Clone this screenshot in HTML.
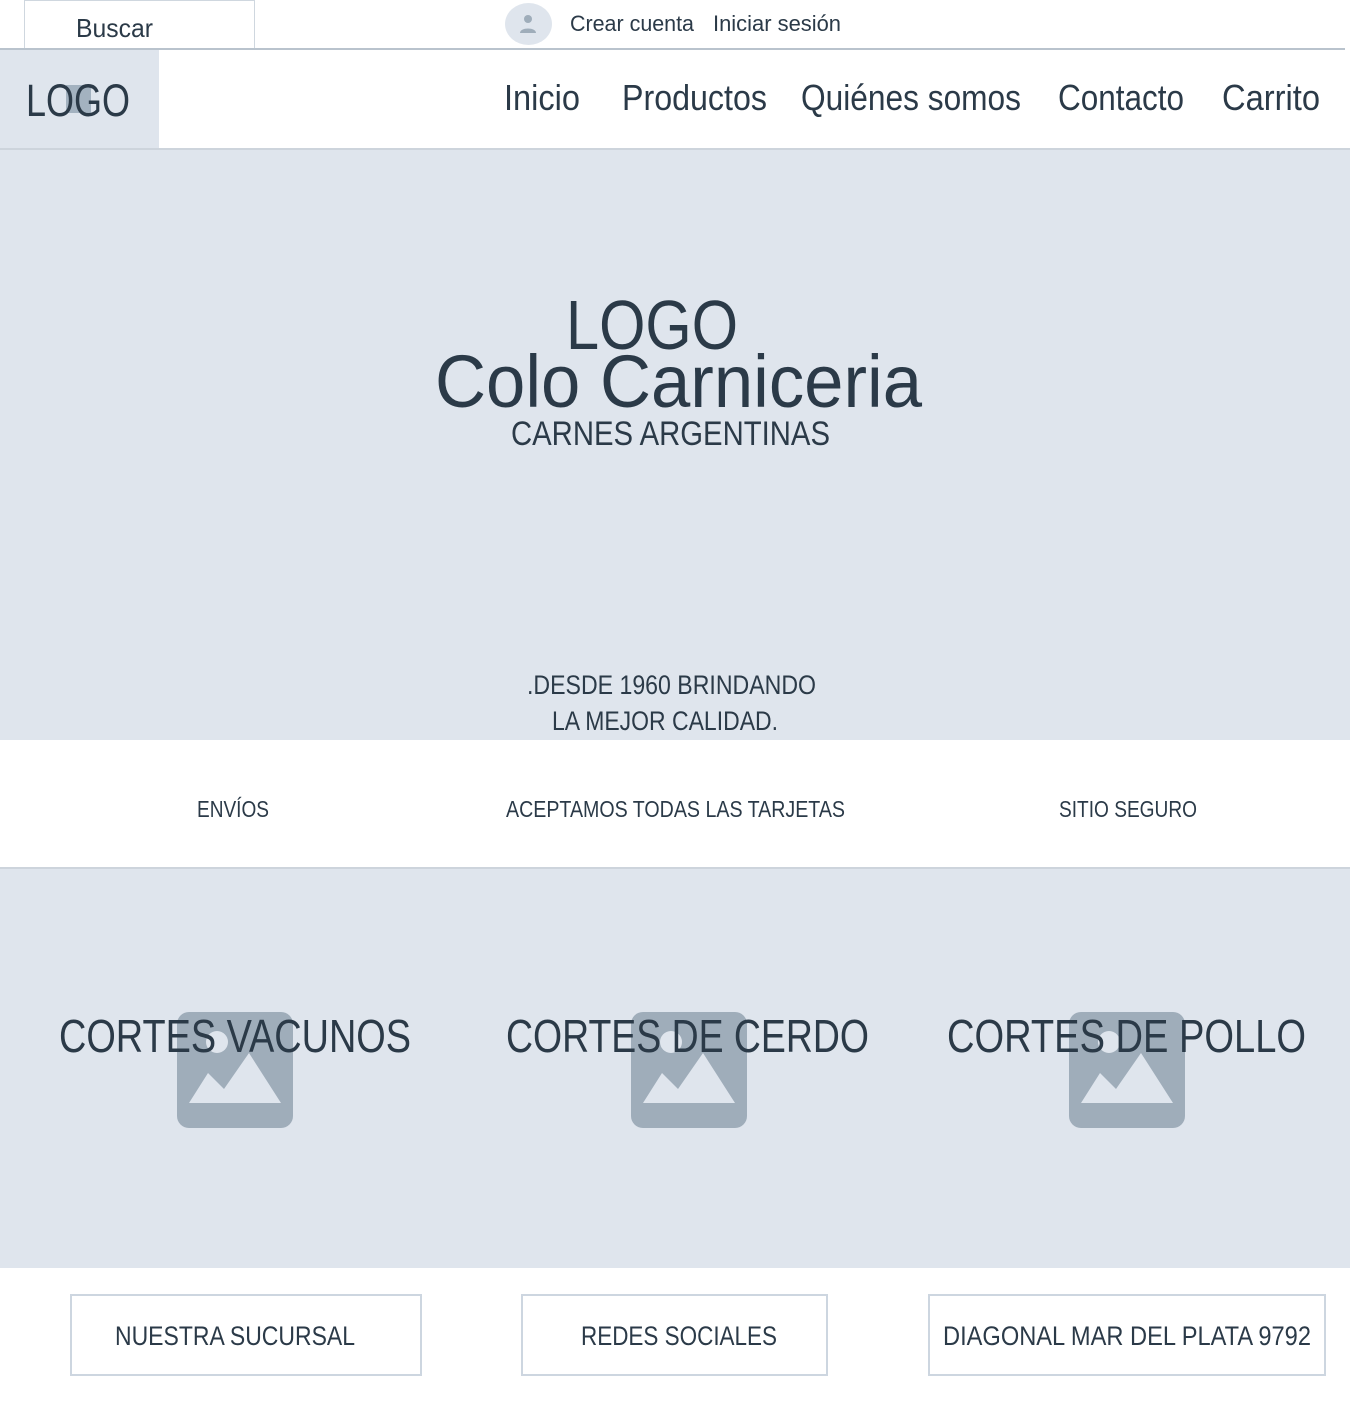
<!DOCTYPE html>
<html><head><meta charset="utf-8">
<style>
html,body{margin:0;padding:0}
body{width:1350px;height:1405px;position:relative;background:#fff;overflow:hidden;font-family:"Liberation Sans",sans-serif;color:#2b3a48}
.b{position:absolute}
.t{position:absolute;white-space:nowrap;line-height:1;transform-origin:0 0}
.img{position:absolute;width:116px;height:116px}
</style></head><body>
<!-- top bar -->
<div class="b" style="left:24px;top:0;width:229px;height:48px;border:1px solid #cfd7df;border-bottom:none;background:#fff"></div>
<div class="b" style="left:0;top:48px;width:1345px;height:2px;background:#b9c3cd"></div>
<div class="b" style="left:505px;top:3px;width:47px;height:42px;border-radius:50%;background:#dfe5ed"></div>
<svg class="b" style="left:516px;top:12px" width="24" height="24" viewBox="0 0 24 24"><circle cx="12" cy="7" r="4" fill="#9fadba"/><path d="M4 21 C4 15 20 15 20 21 Z" fill="#9fadba"/></svg>
<!-- nav -->
<div class="b" style="left:0;top:50px;width:159px;height:99px;background:#dfe5ed"></div>
<div class="b" style="left:0;top:148px;width:1350px;height:2px;background:#cdd4dc"></div>
<div class="b" style="left:66px;top:85px;width:25px;height:28px;background:#a3b2c0"></div>
<!-- hero -->
<div class="b" style="left:0;top:150px;width:1350px;height:590px;background:#dfe5ed"></div>
<!-- features border -->
<div class="b" style="left:0;top:867px;width:1350px;height:2px;background:#cdd4dc"></div>
<!-- categories -->
<div class="b" style="left:0;top:869px;width:1350px;height:399px;background:#dfe5ed"></div>
<svg class="img" style="left:177px;top:1012px" viewBox="0 0 116 116"><rect width="116" height="116" rx="12" fill="#9fadba"/><circle cx="40" cy="30" r="11" fill="#dfe5ed"/><path d="M12 91 L31 61 L47 77 L72 41 L104 91 Z" fill="#dfe5ed"/></svg>
<svg class="img" style="left:631px;top:1012px" viewBox="0 0 116 116"><rect width="116" height="116" rx="12" fill="#9fadba"/><circle cx="40" cy="30" r="11" fill="#dfe5ed"/><path d="M12 91 L31 61 L47 77 L72 41 L104 91 Z" fill="#dfe5ed"/></svg>
<svg class="img" style="left:1069px;top:1012px" viewBox="0 0 116 116"><rect width="116" height="116" rx="12" fill="#9fadba"/><circle cx="40" cy="30" r="11" fill="#dfe5ed"/><path d="M12 91 L31 61 L47 77 L72 41 L104 91 Z" fill="#dfe5ed"/></svg>
<!-- buttons -->
<div class="b" style="left:70px;top:1294px;width:348px;height:78px;border:2px solid #cdd6e0"></div>
<div class="b" style="left:521px;top:1294px;width:303px;height:78px;border:2px solid #cdd6e0"></div>
<div class="b" style="left:928px;top:1294px;width:394px;height:78px;border:2px solid #cdd6e0"></div>

<!-- texts -->
<div class="t" style="left:76px;top:15px;font-size:26px;--w:77">Buscar</div>
<div class="t" style="left:570px;top:13px;font-size:22px;--w:124">Crear cuenta</div>
<div class="t" style="left:713px;top:13px;font-size:22px;--w:128">Iniciar sesión</div>
<div class="t" style="left:26px;top:78px;font-size:45px;--w:104">LOGO</div>
<div class="t" style="left:504px;top:80px;font-size:36px;--w:76">Inicio</div>
<div class="t" style="left:622px;top:80px;font-size:36px;--w:145">Productos</div>
<div class="t" style="left:801px;top:80px;font-size:36px;--w:220">Quiénes somos</div>
<div class="t" style="left:1058px;top:80px;font-size:36px;--w:126">Contacto</div>
<div class="t" style="left:1222px;top:80px;font-size:36px;--w:98">Carrito</div>

<div class="t" style="left:566px;top:290px;font-size:70px;--w:172">LOGO</div>
<div class="t" style="left:435px;top:345px;font-size:74px;--w:487">Colo Carniceria</div>
<div class="t" style="left:511px;top:417px;font-size:34px;--w:319">CARNES ARGENTINAS</div>
<div class="t" style="left:527px;top:672px;font-size:27px;--w:289">.DESDE 1960 BRINDANDO</div>
<div class="t" style="left:552px;top:708px;font-size:27px;--w:226">LA MEJOR CALIDAD.</div>

<div class="t" style="left:197px;top:798px;font-size:23px;--w:72">ENVÍOS</div>
<div class="t" style="left:506px;top:798px;font-size:23px;--w:339">ACEPTAMOS TODAS LAS TARJETAS</div>
<div class="t" style="left:1059px;top:798px;font-size:23px;--w:138">SITIO SEGURO</div>

<div class="t" style="left:59px;top:1013px;font-size:46px;--w:352">CORTES VACUNOS</div>
<div class="t" style="left:506px;top:1013px;font-size:46px;--w:363">CORTES DE CERDO</div>
<div class="t" style="left:947px;top:1013px;font-size:46px;--w:359">CORTES DE POLLO</div>

<div class="t" style="left:115px;top:1323px;font-size:27px;--w:240">NUESTRA SUCURSAL</div>
<div class="t" style="left:581px;top:1323px;font-size:27px;--w:196">REDES SOCIALES</div>
<div class="t" style="left:943px;top:1323px;font-size:27px;--w:368">DIAGONAL MAR DEL PLATA 9792</div>

<script>
document.querySelectorAll('.t').forEach(function(e){
  var w=parseFloat(e.style.getPropertyValue('--w'));
  var r=e.getBoundingClientRect().width;
  if(w&&r) e.style.transform='scaleX('+(w/r)+')';
});
</script>
</body></html>
